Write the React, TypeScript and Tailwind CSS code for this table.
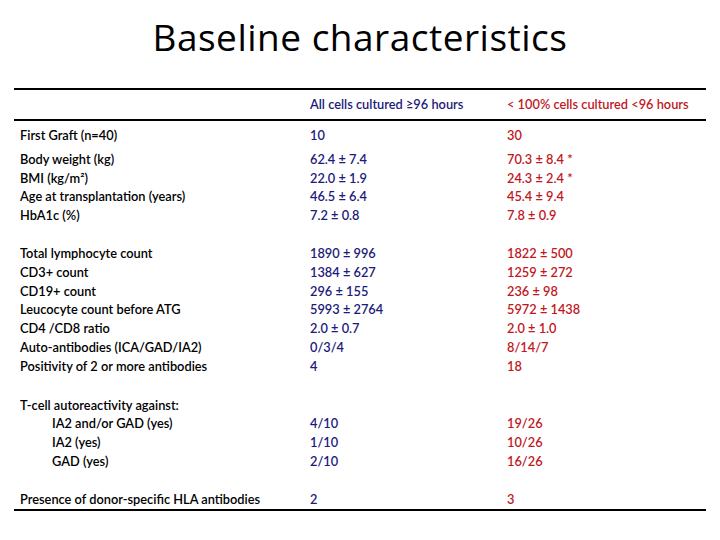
const BLUE = "text-[#1c1a7a]"
const RED = "text-[#c0181e]"

type Row = { label: string; a: string; b: string; indent?: boolean }

const groups: { gap: string; rows: Row[] }[] = [
  { gap: "mt-[5px]", rows: [{ label: "First Graft (n=40)", a: "10", b: "30" }] },
  {
    gap: "mt-[5px]",
    rows: [
      { label: "Body weight (kg)", a: "62.4 ± 7.4", b: "70.3 ± 8.4 *" },
      { label: "BMI (kg/m²)", a: "22.0 ± 1.9", b: "24.3 ± 2.4 *" },
      { label: "Age at transplantation (years)", a: "46.5 ± 6.4", b: "45.4 ± 9.4" },
      { label: "HbA1c (%)", a: "7.2 ± 0.8", b: "7.8 ± 0.9" },
    ],
  },
  {
    gap: "mt-[19px]",
    rows: [
      { label: "Total lymphocyte count", a: "1890 ± 996", b: "1822 ± 500" },
      { label: "CD3+ count", a: "1384 ± 627", b: "1259 ± 272" },
      { label: "CD19+ count", a: "296 ± 155", b: "236 ± 98" },
      { label: "Leucocyte count before ATG", a: "5993 ± 2764", b: "5972 ± 1438" },
      { label: "CD4 /CD8 ratio", a: "2.0 ± 0.7", b: "2.0 ± 1.0" },
      { label: "Auto-antibodies (ICA/GAD/IA2)", a: "0/3/4", b: "8/14/7" },
      { label: "Positivity of 2 or more antibodies", a: "4", b: "18" },
    ],
  },
  {
    gap: "mt-[20px]",
    rows: [
      { label: "T-cell autoreactivity against:", a: "", b: "" },
      { label: "IA2 and/or GAD (yes)", a: "4/10", b: "19/26", indent: true },
      { label: "IA2 (yes)", a: "1/10", b: "10/26", indent: true },
      { label: "GAD (yes)", a: "2/10", b: "16/26", indent: true },
    ],
  },
  {
    gap: "mt-[19px]",
    rows: [{ label: "Presence of donor-specific HLA antibodies", a: "2", b: "3" }],
  },
]

function TableRow({ row }: { row: Row }) {
  return (
    <div className="grid grid-cols-[290px_197px_1fr] pl-[6px] leading-[18.8px]">
      <span className={row.indent ? "pl-[32px]" : ""}>{row.label}</span>
      <span className={BLUE}>{row.a}</span>
      <span className={RED}>{row.b}</span>
    </div>
  )
}

export default function App() {
  return (
    <div
      className="w-[720px] h-[540px] bg-white text-black overflow-hidden"
      style={{ fontFamily: "Lato, 'Liberation Sans', sans-serif" }}
    >
      <h1
        className="pt-[12px] text-center text-[37px] leading-[50px] font-normal tracking-[0.5px]"
        style={{ fontFamily: "'Open Sans', sans-serif" }}
      >
        Baseline characteristics
      </h1>
      <div className="ml-[14px] mt-[26px] w-[692px] text-[12.8px] font-semibold">
        <div className="grid h-[33px] grid-cols-[290px_197px_1fr] items-center border-y-2 border-black pl-[6px]">
          <span />
          <span className={BLUE}>All cells cultured ≥96 hours</span>
          <span className={RED}>&lt; 100% cells cultured &lt;96 hours</span>
        </div>
        {groups.map((g, i) => (
          <div key={i} className={g.gap}>
            {g.rows.map((r) => (
              <TableRow key={r.label} row={r} />
            ))}
          </div>
        ))}
        <div className="border-t-2 border-black" />
      </div>
    </div>
  )
}
